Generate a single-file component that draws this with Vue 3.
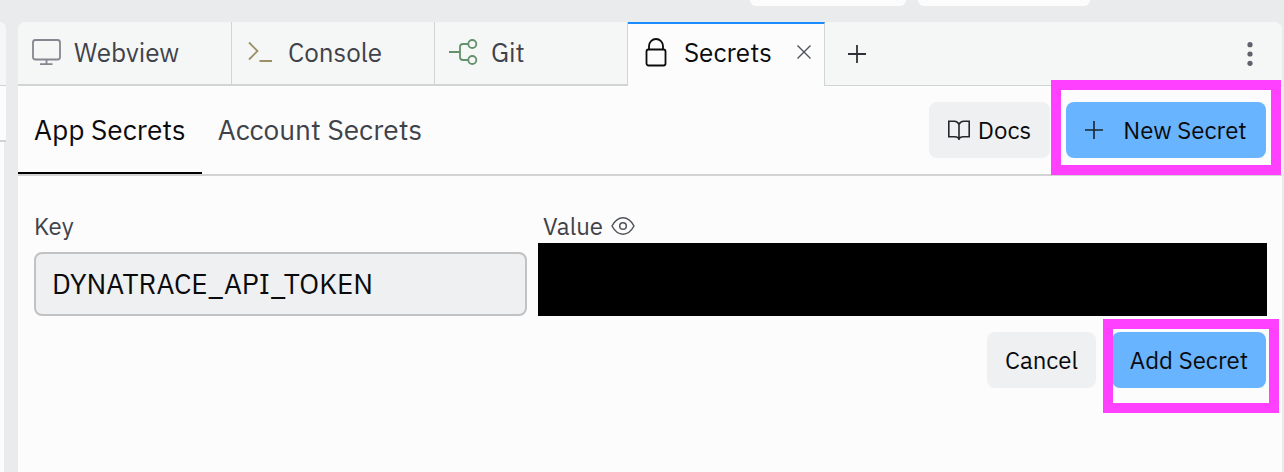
<script setup>
import { ref } from 'vue'

const secretKey = ref('DYNATRACE_API_TOKEN')
const secretValue = ref('')
</script>

<template>
  <div class="workspace">
    <header class="topbar">
      <span class="pill"></span>
      <span class="pill pill-wide"></span>
    </header>

    <div class="panes">
      <aside class="side">
        <div class="side-tabs"></div>
        <div class="side-tools"></div>
        <div class="side-body"></div>
      </aside>

      <main class="pane">
        <nav class="tabs" aria-label="Panels">
          <button class="tab tab-webview" type="button">
            <svg class="icon" width="32" height="32" viewBox="0 0 32 32" fill="none" stroke="#85868f" stroke-width="1.800">
              <rect x="3" y="4" width="27" height="19.500" rx="2.500" />
              <path d="M16.500 23.500v5M10 28.200h12.500" />
            </svg>
            <span>Webview</span>
          </button>
          <button class="tab tab-console" type="button">
            <svg class="icon" width="32" height="32" viewBox="0 0 32 32" fill="none" stroke="#9c9068" stroke-width="1.800">
              <path d="M5 6.500l8.500 8.500L5 23.500M15.500 25h12.500" />
            </svg>
            <span>Console</span>
          </button>
          <button class="tab tab-git" type="button">
            <svg class="icon" width="32" height="32" viewBox="0 0 32 32" fill="none" stroke="#64906b" stroke-width="1.800">
              <path d="M2 16h11M21 8h-5a3 3 0 0 0-3 3v10a3 3 0 0 0 3 3h5" />
              <circle cx="25.300" cy="8" r="4" />
              <circle cx="25.300" cy="24" r="4" />
            </svg>
            <span>Git</span>
          </button>
          <div class="tab tab-active">
            <button class="tab-main" type="button" aria-current="page">
              <svg class="icon" width="32" height="32" viewBox="0 0 32 32" fill="none" stroke="#0b0b0d" stroke-width="1.800">
                <rect x="6.500" y="13.500" width="19" height="16" rx="2" />
                <path d="M9 13.500V10a7 7 0 0 1 14 0v3.500" />
              </svg>
              <span>Secrets</span>
            </button>
            <button class="close" type="button" aria-label="Close Secrets">
              <svg width="16" height="16" viewBox="0 0 16 16" fill="none" stroke="#50525c" stroke-width="1.400">
                <path d="M1.500 1.500l13 13M14.500 1.500l-13 13" />
              </svg>
            </button>
          </div>
          <div class="tabs-rest">
            <button class="bare" type="button" aria-label="New tab">
              <svg width="18" height="18" viewBox="0 0 18 18" fill="none" stroke="#303138" stroke-width="1.800">
                <path d="M9 0v18M0 9h18" />
              </svg>
            </button>
            <button class="bare" type="button" aria-label="More options">
              <svg width="6" height="26" viewBox="0 0 6 26" fill="#5f616b">
                <circle cx="3" cy="3.700" r="2.600" />
                <circle cx="3" cy="13" r="2.600" />
                <circle cx="3" cy="22.300" r="2.600" />
              </svg>
            </button>
          </div>
        </nav>

        <div class="subbar">
          <button class="scope scope-active" type="button">App Secrets</button>
          <button class="scope" type="button">Account Secrets</button>
          <div class="actions">
            <button class="btn btn-docs" type="button">
              <svg width="22" height="20" viewBox="0 0 22 20" fill="none" stroke="#26272c" stroke-width="1.600">
                <path d="M11 4.500C10 2.200 8.500 1.300 6.500 1.300H.800v15.400h6c2.200 0 3.600.600 4.200 2.300.600-1.700 2-2.300 4.200-2.300h6V1.300h-5.700C13.500 1.300 12 2.200 11 4.500zM11 4.500V20" />
              </svg>
              Docs
            </button>
            <div class="callout-host">
              <button class="btn btn-primary btn-new" type="button">
                <svg width="18" height="18" viewBox="0 0 18 18" fill="none" stroke="#1b2530" stroke-width="1.600">
                  <path d="M9 0v18M0 9h18" />
                </svg>
                New Secret
              </button>
              <span class="callout callout-new"></span>
            </div>
          </div>
        </div>

        <form class="form" @submit.prevent>
          <div class="fields">
            <div class="field">
              <label class="label" for="secret-key">Key</label>
              <input id="secret-key" v-model="secretKey" class="input" type="text" />
            </div>
            <div class="field">
              <div class="label-row">
                <label class="label" for="secret-value">Value</label>
                <button class="bare" type="button" aria-label="Show value">
                  <svg width="24" height="20" viewBox="0 0 24 20" fill="none" stroke="#51535c" stroke-width="1.500">
                    <path d="M1 10C4 4.500 7.700 1.800 12 1.800S20 4.500 23 10c-3 5.500-6.700 8.200-11 8.200S4 15.500 1 10z" />
                    <circle cx="12" cy="10" r="3.300" />
                  </svg>
                </button>
              </div>
              <div class="masked">
                <input id="secret-value" v-model="secretValue" class="input" type="password" />
                <span class="redaction"></span>
              </div>
            </div>
          </div>
          <div class="form-actions">
            <button class="btn btn-cancel" type="button">Cancel</button>
            <div class="callout-host">
              <button class="btn btn-primary btn-add" type="submit">Add Secret</button>
              <span class="callout callout-add"></span>
            </div>
          </div>
        </form>
      </main>
    </div>
  </div>
</template>

<style>
body {
  margin: 0;
  background: #eaebed;
}
</style>

<style scoped>
.workspace {
  --line: #d2d4d4;
  --surface: #fcfcfc;
  --bar: #f5f7f6;
  --text: #40424a;
  display: flex;
  flex-direction: column;
  min-height: 100vh;
  color: var(--text);
  font-family: "IBM Plex Sans", Roboto, "Noto Sans", sans-serif;
  font-size: 28px;
}
button,
input {
  box-sizing: border-box;
  margin: 0;
  font: inherit;
  color: inherit;
}
button {
  display: flex;
  align-items: center;
  border: 0;
  padding: 0;
  background: none;
  white-space: nowrap;
}
svg {
  display: block;
  flex: none;
}
.topbar {
  display: flex;
  justify-content: flex-end;
  gap: 12px;
  height: 22px;
  padding-right: 194px;
}
.pill {
  width: 156px;
  height: 6px;
  border-radius: 0 0 8px 8px;
  background: var(--surface);
}
.pill-wide {
  width: 172px;
}
.panes {
  flex: 1;
  display: grid;
  grid-template-columns: 6px 1fr;
  column-gap: 12px;
  padding-right: 2px;
}
.side {
  display: flex;
  flex-direction: column;
}
.side-tabs {
  height: 63px;
  border-bottom: 1px solid var(--line);
  border-radius: 0 6px 0 0;
  background: var(--bar);
}
.side-tools {
  height: 54px;
  border-bottom: 2px solid var(--line);
  background: var(--surface);
}
.side-body {
  flex: 1;
  margin-right: 2px;
  background: var(--surface);
}
.pane {
  min-width: 0;
  border-radius: 8px 8px 0 0;
  background: var(--surface);
}
.tabs {
  display: flex;
  height: 64px;
  border-radius: 8px 8px 0 0;
  background: var(--bar);
}
.tab {
  display: flex;
  align-items: center;
  box-sizing: border-box;
  gap: 12px;
  padding: 0 0 2px 12px;
  border-right: 1px solid var(--line);
  border-bottom: 2px solid var(--line);
  font-size: 26px;
}
.tab-webview {
  width: 214px;
}
.tab-console {
  width: 203px;
}
.tab-git {
  width: 193px;
}
.tab-active {
  width: 197px;
  justify-content: space-between;
  padding: 0 12px 6px 12px;
  border-top: 2px solid #1a8cff;
  border-bottom: 0;
  background: var(--surface);
  color: #0b0b0d;
}
.tab-main {
  gap: 12px;
}
.tabs-rest {
  flex: 1;
  display: flex;
  align-items: center;
  justify-content: space-between;
  padding: 0 29px 0 23px;
  border-bottom: 1px solid var(--line);
}
.subbar {
  display: flex;
  height: 88px;
  border-bottom: 2px solid var(--line);
}
.scope {
  padding: 0 16px 2px;
  border-top: 2px solid transparent;
  border-bottom: 2px solid transparent;
}
.scope-active {
  border-bottom-color: #000;
  color: #0b0b0d;
}
.actions {
  display: flex;
  align-items: center;
  gap: 16px;
  margin-left: auto;
  padding-right: 16px;
}
.btn {
  justify-content: center;
  height: 56px;
  border-radius: 8px;
  background: #eff0f2;
  color: #0b0b0d;
  font-size: 24px;
}
.btn-docs {
  gap: 8px;
  width: 121px;
}
.btn-primary {
  background: #69b4ff;
}
.btn-new {
  gap: 20px;
  width: 200px;
}
.btn-cancel {
  width: 109px;
}
.btn-add {
  width: 154px;
}
.callout-host {
  position: relative;
}
.callout {
  position: absolute;
  border: 10px solid #ff40ff;
  pointer-events: none;
}
.callout-new {
  inset: -22px -15px -17px;
}
.callout-add {
  inset: -13px -13px -25px -9px;
}
.form {
  padding: 34px 16px 16px;
}
.fields {
  display: grid;
  grid-template-columns: 15fr 22fr;
  gap: 16px;
}
.field {
  display: flex;
  flex-direction: column;
  gap: 10px;
  min-width: 0;
}
.label-row {
  display: flex;
  align-items: center;
  gap: 8px;
}
.label {
  font-size: 24px;
  line-height: 32px;
}
.input {
  width: 100%;
  height: 64px;
  padding: 0 16px 2px;
  border: 2px solid #c1c2c3;
  border-radius: 8px;
  background: #eff0f2;
  color: #0b0b0d;
  outline: 0;
}
.masked {
  position: relative;
}
.redaction {
  position: absolute;
  inset: -9px -1px 0 -5px;
  background: #000;
}
.form-actions {
  display: flex;
  justify-content: flex-end;
  gap: 16px;
  margin-top: 16px;
}
</style>
